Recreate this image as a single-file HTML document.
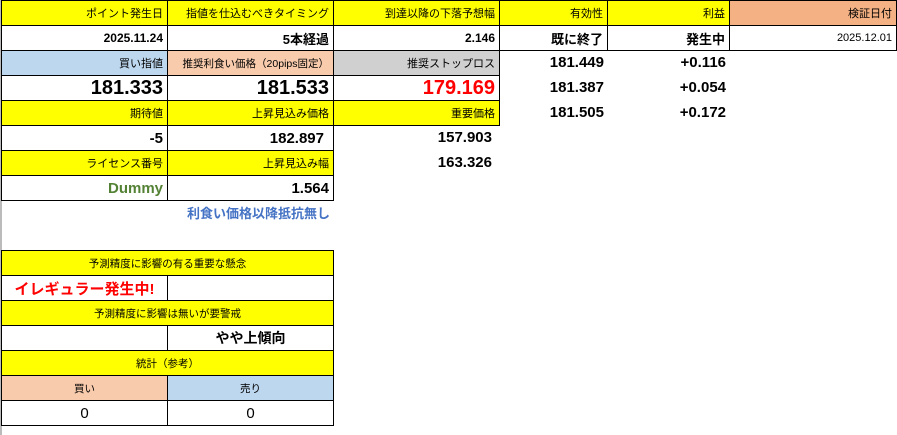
<!DOCTYPE html>
<html><head><meta charset="utf-8"><style>
body{margin:0;width:897px;height:435px;background:#fff;position:relative;overflow:hidden;font-family:"Liberation Sans","Noto Sans CJK JP",sans-serif;}
.c{position:absolute;box-sizing:border-box;display:flex;align-items:center;justify-content:flex-end;padding-right:4px;font-size:11px;color:#000;white-space:nowrap;}
.b{border:1px solid #000;}
.y{background:#ffff00;}
.lb{background:#bdd7ee;}
.pk{background:#f8cbad;}
.gr{background:#d0d0d0;}
.or{background:#f4b183;}
.big{font-size:20px;font-weight:bold;}
.md{font-size:15px;font-weight:bold;}
.bd{font-weight:bold;font-size:12px;}
.ctr{justify-content:center;padding-right:0;}
</style></head><body>
<div style="position:absolute;left:0;top:0;width:2px;height:435px;background:#bbb"></div>
<div class="c b y" style="left:1px;top:0;width:167px;height:26px">ポイント発生日</div>
<div class="c b y" style="left:167px;top:0;width:167px;height:26px">指値を仕込むべきタイミング</div>
<div class="c b y" style="left:333px;top:0;width:167px;height:26px">到達以降の下落予想幅</div>
<div class="c b y" style="left:499px;top:0;width:109px;height:26px">有効性</div>
<div class="c b y" style="left:607px;top:0;width:123px;height:26px">利益</div>
<div class="c b or" style="left:729px;top:0;width:168px;height:26px">検証日付</div>
<div class="c b bd" style="left:1px;top:25px;width:167px;height:26px">2025.11.24</div>
<div class="c b bd" style="left:167px;top:25px;width:167px;height:26px;font-size:13px">5本経過</div>
<div class="c b bd" style="left:333px;top:25px;width:167px;height:26px">2.146</div>
<div class="c b md" style="left:499px;top:25px;width:109px;height:26px;font-size:13px">既に終了</div>
<div class="c b md" style="left:607px;top:25px;width:123px;height:26px;font-size:13px">発生中</div>
<div class="c b" style="left:729px;top:25px;width:168px;height:26px;font-size:11px">2025.12.01</div>
<div class="c b lb" style="left:1px;top:50px;width:167px;height:26px">買い指値</div>
<div class="c b pk" style="left:167px;top:50px;width:167px;height:26px;font-size:10.5px">推奨利食い価格（20pips固定）</div>
<div class="c b gr" style="left:333px;top:50px;width:167px;height:26px">推奨ストップロス</div>
<div class="c md" style="left:499px;top:50px;width:109px;height:25px">181.449</div>
<div class="c md" style="left:607px;top:50px;width:123px;height:25px">+0.116</div>
<div class="c b big" style="left:1px;top:75px;width:167px;height:26px">181.333</div>
<div class="c b big" style="left:167px;top:75px;width:167px;height:26px">181.533</div>
<div class="c b big" style="left:333px;top:75px;width:167px;height:26px;color:#ff0000">179.169</div>
<div class="c md" style="left:499px;top:75px;width:109px;height:25px">181.387</div>
<div class="c md" style="left:607px;top:75px;width:123px;height:25px">+0.054</div>
<div class="c b y" style="left:1px;top:100px;width:167px;height:26px">期待値</div>
<div class="c b y" style="left:167px;top:100px;width:167px;height:26px">上昇見込み価格</div>
<div class="c b y" style="left:333px;top:100px;width:167px;height:26px">重要価格</div>
<div class="c md" style="left:499px;top:100px;width:109px;height:25px">181.505</div>
<div class="c md" style="left:607px;top:100px;width:123px;height:25px">+0.172</div>
<div class="c b md" style="left:1px;top:125px;width:167px;height:26px">-5</div>
<div class="c b md" style="left:167px;top:125px;width:167px;height:26px;padding-right:9px">182.897</div>
<div class="c md" style="left:333px;top:125px;width:167px;height:25px;padding-right:8px">157.903</div>
<div class="c b y" style="left:1px;top:150px;width:167px;height:26px">ライセンス番号</div>
<div class="c b y" style="left:167px;top:150px;width:167px;height:26px">上昇見込み幅</div>
<div class="c md" style="left:333px;top:150px;width:167px;height:25px;padding-right:8px">163.326</div>
<div class="c b md" style="left:1px;top:175px;width:167px;height:26px;color:#548235">Dummy</div>
<div class="c b md" style="left:167px;top:175px;width:167px;height:26px">1.564</div>
<div class="c bd" style="left:167px;top:200px;width:167px;height:25px;color:#4472c4;font-size:13px">利食い価格以降抵抗無し</div>
<div class="c b y ctr" style="left:1px;top:250px;width:333px;height:26px;font-size:10.5px">予測精度に影響の有る重要な懸念</div>
<div class="c b ctr bd" style="left:1px;top:275px;width:167px;height:26px;color:#ff0000;font-size:15px">イレギュラー発生中!</div>
<div class="c b" style="left:167px;top:275px;width:167px;height:26px"></div>
<div class="c b y ctr" style="left:1px;top:300px;width:333px;height:26px;font-size:10.5px">予測精度に影響は無いが要警戒</div>
<div class="c b" style="left:1px;top:325px;width:167px;height:26px"></div>
<div class="c b ctr bd" style="left:167px;top:325px;width:167px;height:26px;font-size:14px">やや上傾向</div>
<div class="c b y ctr" style="left:1px;top:350px;width:333px;height:26px;font-size:10.5px">統計（参考）</div>
<div class="c b pk ctr" style="left:1px;top:375px;width:167px;height:26px;font-size:10.5px">買い</div>
<div class="c b lb ctr" style="left:167px;top:375px;width:167px;height:26px;font-size:10.5px">売り</div>
<div class="c b ctr" style="left:1px;top:400px;width:167px;height:26px;font-size:15px">0</div>
<div class="c b ctr" style="left:167px;top:400px;width:167px;height:26px;font-size:15px">0</div>
</body></html>
